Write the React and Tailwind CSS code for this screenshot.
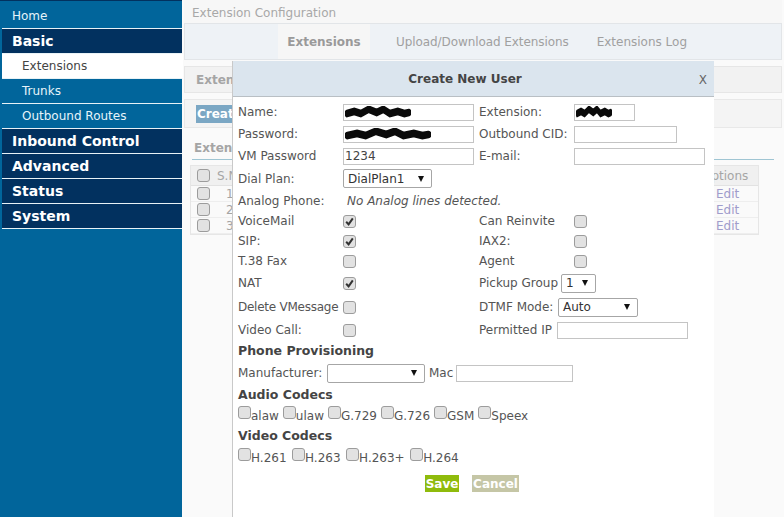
const font = { fontFamily: '"DejaVu Sans", sans-serif' };

function NavItem({ label, active, heading, sub }) {
  let cls = "bg-[#01659b] text-[#e6f4fa]";
  if (heading) cls = "bg-[#02315f] text-white font-bold text-[14px]";
  if (active) cls = "bg-white text-[#444] mr-[-1px]";
  return (
    <div className={`h-[24px] flex items-center text-[12px] ${sub ? "pl-[20px]" : "pl-[10px]"} ${cls}`}>
      {label}
    </div>
  );
}

function Check({ checked, className = "" }) {
  return (
    <span className={`relative inline-flex w-[13px] h-[13px] shrink-0 ${className}`}>
      <input
        type="checkbox"
        defaultChecked={checked}
        className="appearance-none w-[13px] h-[13px] rounded-[3px] border border-[#9c9c9c] bg-[#e2e2e2]"
      />
      {checked && (
        <svg viewBox="0 0 13 13" className="absolute inset-0 w-[13px] h-[13px] pointer-events-none">
          <path d="M3.2 6.8 L5.6 9.4 L9.8 3.4" fill="none" stroke="#333" strokeWidth="2" />
        </svg>
      )}
    </span>
  );
}

function Field({ width, value, scribble }) {
  return (
    <span className="relative inline-flex" style={{ width }}>
      <input
        defaultValue={value}
        className="w-full h-[17px] border border-[#c4c4c4] bg-white px-[1px] text-[12px] text-[#444] outline-none"
      />
      {scribble && (
        <svg viewBox="0 0 100 12" preserveAspectRatio="none" className="absolute left-[2px] top-[2px] h-[13px] pointer-events-none" style={{ width: scribble }}>
          <path d="M3 7 L14 5 L24 7 L36 3 L48 6 L58 3 L68 7 L80 5 L90 7 L97 6" fill="none" stroke="#0a0a0a" strokeWidth="7" strokeLinecap="round" />
        </svg>
      )}
    </span>
  );
}

function Dropdown({ width, value }) {
  return (
    <span className="h-[19px] flex items-center justify-between border border-[#a6a6a6] rounded-[2px] bg-white pl-[4px] pr-[7px] text-[12px] text-[#333]" style={{ width }}>
      <span>{value}</span>
      <span className="w-0 h-0 border-x-[3.5px] border-x-transparent border-t-[6px] border-t-[#111]" />
    </span>
  );
}

// one row of the two-column form: label + control on both sides
function Row({ h, label, left, label2, right }) {
  return (
    <div className="flex items-center text-[12px] text-[#555]" style={{ height: h }}>
      <span className="w-[105px] whitespace-nowrap">{label}</span>
      <span className="w-[136px] flex items-center">{left}</span>
      {label2 && <span className="w-[95px] whitespace-nowrap">{label2}</span>}
      {right}
    </div>
  );
}

function Codec({ label, gap }) {
  return (
    <span className="flex items-start" style={{ marginRight: gap }}>
      <Check className="mt-[-1px]" />
      <span>{label}</span>
    </span>
  );
}

function Modal() {
  return (
    <div className="absolute left-[232px] top-[61px] w-[482px] h-[456px] bg-white border-l border-[#c9c9c9] text-[#555]">
      <div className="relative h-[36px] flex items-center justify-center pr-[17px] bg-[#dbe5ee] border-b border-[#b9bfc4] text-[12px] font-bold text-[#444]">
        Create New User
        <span className="absolute right-[7px] top-[10px] font-normal text-[12px] text-[#666]">X</span>
      </div>
      <div className="pl-[5px] pt-[4px]">
        <Row h={22} label="Name:" left={<Field width={131} scribble={66} />} label2="Extension:" right={<Field width={61} scribble={36} />} />
        <Row h={22} label="Password:" left={<Field width={131} scribble={86} />} label2="Outbound CID:" right={<Field width={103} />} />
        <Row h={22} label="VM Password" left={<Field width={131} value="1234" />} label2="E-mail:" right={<Field width={131} />} />
        <Row h={23} label="Dial Plan:" left={<Dropdown width={89} value="DialPlan1" />} />
        <Row h={21} label="Analog Phone:" left={<span className="pl-[4px] italic whitespace-nowrap">No Analog lines detected.</span>} />
        <Row h={20} label="VoiceMail" left={<Check checked />} label2="Can Reinvite" right={<Check />} />
        <Row h={20} label="SIP:" left={<Check checked />} label2="IAX2:" right={<Check />} />
        <Row h={20} label="T.38 Fax" left={<Check />} label2="Agent" right={<Check />} />
        <Row h={24} label="NAT" left={<Check checked />} label2="Pickup Group" right={<span className="ml-[-13px]"><Dropdown width={35} value="1" /></span>} />
        <Row h={24} label={<span className="tracking-[-0.25px]">Delete VMessage</span>} left={<Check />} label2="DTMF Mode:" right={<span className="ml-[-16px]"><Dropdown width={80} value="Auto" /></span>} />
        <Row h={22} label="Video Call:" left={<Check />} label2="Permitted IP" right={<span className="ml-[-17px]"><Field width={131} /></span>} />
        <div className="h-[21px] flex items-center text-[12.5px] font-bold text-[#444]">Phone Provisioning</div>
        <div className="h-[22px] flex items-center text-[12px]">
          <span className="w-[89px]">Manufacturer:</span>
          <Dropdown width={98} value="" />
          <span className="ml-[4px] w-[27px]">Mac</span>
          <Field width={117} />
        </div>
        <div className="h-[23px] flex items-center text-[12.5px] font-bold text-[#444]">Audio Codecs</div>
        <div className="h-[18px] flex items-center text-[12px]">
          {["alaw", "ulaw", "G.729", "G.726", "GSM", "Speex"].map((c) => <Codec key={c} label={c} gap={4} />)}
        </div>
        <div className="h-[23px] flex items-center text-[12.5px] font-bold text-[#444]">Video Codecs</div>
        <div className="h-[19px] flex items-center text-[12px]">
          {["H.261", "H.263", "H.263+", "H.264"].map((c) => <Codec key={c} label={c} gap={5.5} />)}
        </div>
        <div className="flex gap-[13px] pl-[187px] pt-[8px]">
          <button className="w-[34px] h-[17px] bg-[#8fbb0c] text-white text-[12px] font-bold leading-none">Save</button>
          <button className="w-[47px] h-[17px] bg-[#c5c6a6] text-white text-[12px] font-bold leading-none">Cancel</button>
        </div>
      </div>
    </div>
  );
}

export default function App() {
  return (
    <div className="relative w-[784px] h-[517px] overflow-hidden flex bg-[#fafafa]" style={font}>
      {/* sidebar */}
      <div className="w-[182px] shrink-0 bg-[#01659b] pl-[2px] pt-[3px] border-t-[1px] border-[#02315f]">
        <div className="flex flex-col gap-[1px] bg-[#e8f2f6]">
          <NavItem label="Home" />
          <NavItem label="Basic" heading />
          <NavItem label="Extensions" sub active />
          <NavItem label="Trunks" sub />
          <NavItem label="Outbound Routes" sub />
          <NavItem label="Inbound Control" heading />
          <NavItem label="Advanced" heading />
          <NavItem label="Status" heading />
          <NavItem label="System" heading />
        </div>
        <div className="h-[1px] bg-[#e8f2f6]" />
      </div>

      {/* page behind the dialog */}
      <div className="flex-1 min-w-0 px-[2px] text-[#a5a5a5]">
        <div className="h-[23px] pl-[8px] pt-[2px] flex items-center text-[12px] text-[#a8a8a8] bg-[#f7f7f7]">Extension Configuration</div>
        <div className="h-[37px] flex items-stretch gap-[14px] pl-[93px] bg-[#eef2f6] border border-[#e2e5e8] text-[12px]">
          <span className="w-[92px] flex items-center justify-center bg-[#f6f6f6] font-bold text-[#9a9a9a]">Extensions</span>
          <span className="px-[12px] flex items-center text-[#a0a0a0] tracking-[-0.08px]">Upload/Download Extensions</span>
          <span className="ml-[2px] flex items-center text-[#a0a0a0]">Extensions Log</span>
        </div>
        <div className="mt-[6px] h-[27px] pl-[11px] flex items-center bg-[#f2f2f2] border border-[#e6e6e6] text-[12px] font-bold text-[#a5a5a5]">Extensions</div>
        <div className="mt-[6px] h-[29px] pl-[11px] flex items-center bg-[#f4f4f4] border border-[#e8e8e8]">
          <span className="px-[1px] bg-[#7ba7c4] text-white text-[12px] font-bold">Create</span>
        </div>
        <div className="mx-[8px] mt-[8px] h-[24px] pl-[2px] flex items-center border-b border-[#9fc5d3] text-[12px] font-bold text-[#a5a5a5]">Extensions</div>
        <div className="ml-[6px] mt-[5px] w-[569px] border border-[#e6e6e6] text-[12px]">
          <div className="h-[20px] flex items-center bg-[#f0f0f0] border-b border-[#e2e2e2]">
            <span className="w-[26px] pl-[6px] flex"><Check /></span>
            <span className="flex-1">S.N</span>
            <span className="w-[56px]">Options</span>
          </div>
          {[1, 2, 3].map((n) => (
            <div key={n} className="h-[16px] flex items-center border-b border-[#eee]">
              <span className="w-[26px] pl-[6px] flex"><Check /></span>
              <span className="flex-1 pl-[9px]">{n}</span>
              <span className="w-[42px] text-[#a09ccb]">Edit</span>
            </div>
          ))}
        </div>
      </div>

      <Modal />
    </div>
  );
}
